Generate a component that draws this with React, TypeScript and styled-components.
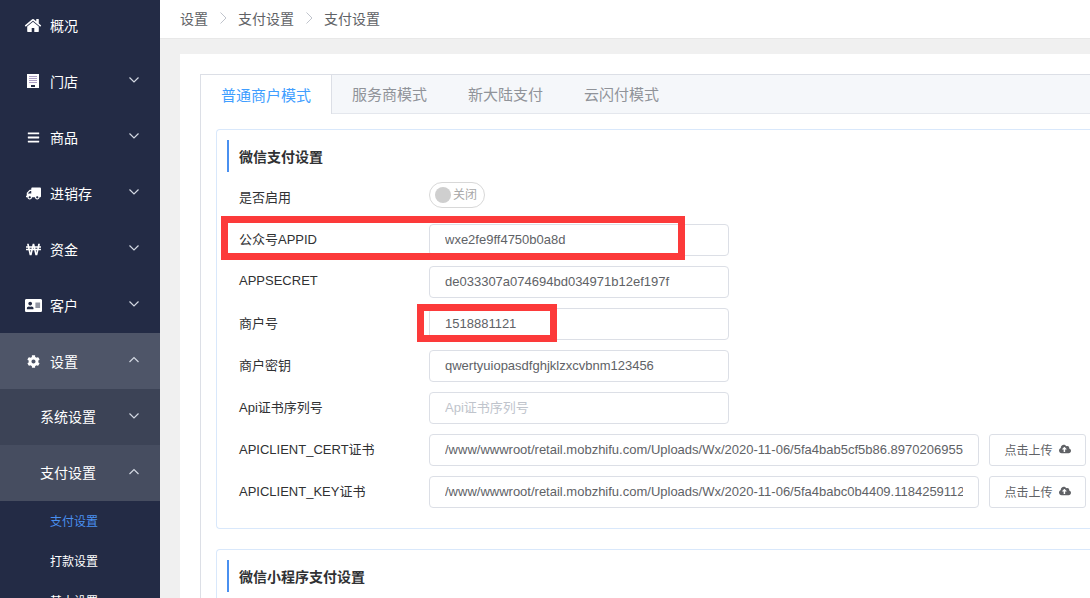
import React from 'react';
import styled, { createGlobalStyle } from 'styled-components';
import { FaBars, FaTruck, FaWonSign, FaAddressCard, FaCog, FaCloudUploadAlt } from 'react-icons/fa';

const FONT = `"Liberation Sans", "Noto Sans CJK SC", sans-serif`;

const Global = createGlobalStyle`
  html, body { margin: 0; padding: 0; height: 598px; overflow: hidden; background: #f0f0f0; }
  #root { height: 598px; }
  * { box-sizing: border-box; }
  body { font-family: ${FONT}; }
`;

const Page = styled.div`
  display: flex;
  width: 1090px;
  height: 598px;
  overflow: hidden;
`;

const Sidebar = styled.nav`
  width: 160px;
  flex: none;
  height: 598px;
  overflow: hidden;
  background: #232b45;
  color: #fff;
`;

const MenuList = styled.div`
  margin-top: -3px;
`;

const MenuRow = styled.div<{ $bg?: string; $indent?: number }>`
  height: 56px;
  display: flex;
  align-items: center;
  padding-left: ${p => p.$indent ?? 24}px;
  padding-right: 20px;
  font-size: 14px;
  color: #fff;
  background: ${p => p.$bg ?? 'transparent'};
`;

const MenuIcon = styled.span`
  width: 18px;
  height: 16px;
  margin-right: 8px;
  display: flex;
  align-items: center;
  justify-content: center;
  flex: none;
  font-size: 14px;
`;

const MenuLabel = styled.span<{ $raised?: boolean }>`
  flex: 1;
  padding-bottom: ${p => (p.$raised ? 2 : 0)}px;
`;

const Chevron = styled.svg`
  width: 12px;
  height: 8px;
  margin-top: -3px;
  margin-right: 0;
  flex: none;
  fill: none;
  stroke: #d3d8e2;
  stroke-width: 1.2;
`;

const SubRow = styled.div<{ $active?: boolean }>`
  height: 40px;
  display: flex;
  align-items: center;
  padding: 0 0 2px 50px;
  font-size: 12px;
  color: ${p => (p.$active ? '#4a90f0' : '#fff')};
`;

const Main = styled.main`
  flex: 1;
  min-width: 0;
  display: flex;
  flex-direction: column;
`;

const Crumbs = styled.header`
  height: 39px;
  flex: none;
  background: #fff;
  border-bottom: 1px solid #e8e8e8;
  display: flex;
  align-items: center;
  padding: 0 0 3px 20px;
  font-size: 14px;
  color: #606266;
`;

const CrumbSep = styled.svg`
  width: 8px;
  height: 12px;
  margin: 0 11px;
  fill: none;
  stroke: #c0c4cc;
  stroke-width: 1;
`;

const Content = styled.div`
  flex: 1;
  padding: 15px 0 0 20px;
  overflow: hidden;
`;

const Card = styled.div`
  width: 1000px;
  height: 600px;
  background: #fff;
  padding: 20px;
`;

const Tabs = styled.div`
  border: 1px solid #dcdfe6;
  border-right: none;
  height: 560px;
`;

const TabBar = styled.div`
  display: flex;
  height: 39px;
  background: #f5f7fa;
  border-bottom: 1px solid #e4e7ed;
`;

const Tab = styled.div<{ $active?: boolean }>`
  height: ${p => (p.$active ? 39 : 38)}px;
  padding: 0 20px 1px;
  display: flex;
  align-items: center;
  font-size: 15px;
  color: ${p => (p.$active ? '#409eff' : '#909399')};
  background: ${p => (p.$active ? '#fff' : 'transparent')};
  border-right: 1px solid ${p => (p.$active ? '#dcdfe6' : 'transparent')};
`;

const TabBody = styled.div`
  padding: 15px;
`;

const Section = styled.section<{ $height: number }>`
  height: ${p => p.$height}px;
  border: 1px solid #d9e8fb;
  border-right: none;
  border-radius: 4px 0 0 4px;
  margin-bottom: 20px;
  padding: 10px 0 0 10px;
`;

const SectionTitle = styled.h3`
  margin: 0 0 10px;
  height: 32px;
  line-height: 35px;
  border-left: 2px solid #4a90f0;
  padding-left: 10px;
  font-size: 14px;
  font-weight: 700;
  color: #303133;
`;

const Row = styled.div`
  display: flex;
  align-items: center;
  height: 32px;
  margin-bottom: 10px;
`;

const Label = styled.label`
  width: 202px;
  flex: none;
  padding: 0 0 4px 12px;
  font-size: 13px;
  color: #303133;
`;

const Field = styled.input<{ $wide?: boolean }>`
  width: ${p => (p.$wide ? 550 : 300)}px;
  height: 32px;
  flex: none;
  border: 1px solid #dcdfe6;
  border-radius: 4px;
  padding: 0 15px 2px;
  font: 13px ${FONT};
  color: #606266;
  background: #fff;
  outline: none;
  &::placeholder { color: #c0c4cc; opacity: 1; }
`;

const UploadButton = styled.button`
  width: 97px;
  height: 32px;
  margin-left: 10px;
  flex: none;
  display: flex;
  align-items: center;
  justify-content: center;
  gap: 6px;
  border: 1px solid #dcdfe6;
  border-radius: 3px;
  background: #fff;
  color: #606266;
  font: 12px ${FONT};
  padding: 0 0 2px;
`;

const Toggle = styled.div`
  width: 56px;
  height: 26px;
  align-self: flex-start;
  border: 1px solid #d8d8d8;
  border-radius: 13px;
  display: flex;
  align-items: center;
  padding-left: 5px;
  gap: 2px;
  font-size: 12px;
  line-height: 22px;
  color: #a8a8a8;
`;

const Knob = styled.span`
  width: 16px;
  height: 16px;
  border-radius: 50%;
  background: #cfcfcf;
  flex: none;
`;

const Highlight = styled.div<{ $x: number; $y: number; $w: number; $h: number }>`
  position: absolute;
  left: ${p => p.$x}px;
  top: ${p => p.$y}px;
  width: ${p => p.$w}px;
  height: ${p => p.$h}px;
  border: 7px solid #fc3a3a;
  pointer-events: none;
`;

const Down = () => (
  <Chevron viewBox="0 0 12 8"><path d="M1.5 1.5 6 6 10.5 1.5" /></Chevron>
);
const Up = () => (
  <Chevron viewBox="0 0 12 8"><path d="M1.5 6 6 1.5 10.5 6" /></Chevron>
);
const Sep = () => (
  <CrumbSep viewBox="0 0 8 12"><path d="M1.5 .5 7 6 1.5 11.5" /></CrumbSep>
);

const HomeIcon = () => (
  <svg width="19" height="19" viewBox="0 0 1792 1792" fill="#fff">
    <path d="M1472 992v480q0 26-19 45t-45 19h-384v-384h-256v384h-384q-26 0-45-19t-19-45v-480q0-1 .5-3t.5-3l575-474 575 474q1 2 1 6zm223-69l-62 74q-8 9-21 11h-3q-13 0-21-7l-692-577-692 577q-12 8-24 7-13-2-21-11l-62-74q-8-10-7-23.5t11-22.5l719-599q32-26 76-26t76 26l244 204v-195q0-14 9-23t23-9h192q14 0 23 9t9 23v408l219 182q10 8 11 21.5t-7 23.5z" />
  </svg>
);

const BuildingIcon = () => (
  <svg width="12" height="14" viewBox="0 0 12 14">
    <rect width="12" height="14" fill="#fff" />
    {[2, 4, 6, 8].flatMap(x =>
      [2, 4, 6, 8].map(y => <rect key={`${x}-${y}`} x={x + 0.5} y={y} width="1" height="1" fill="#5a3f8a" />)
    )}
    <rect x="4" y="11" width="4" height="2" fill="#232b45" />
  </svg>
);

const menu: { label: string; icon: React.ReactNode; chevron?: boolean }[] = [
  { label: '概况', icon: <HomeIcon /> },
  { label: '门店', icon: <BuildingIcon />, chevron: true },
  { label: '商品', icon: <FaBars size={13} />, chevron: true },
  { label: '进销存', icon: <FaTruck size={15} style={{ transform: 'scaleX(-1)' }} />, chevron: true },
  { label: '资金', icon: <FaWonSign size={15} />, chevron: true },
  { label: '客户', icon: <FaAddressCard size={17} />, chevron: true },
];

const rows = [
  { label: '公众号APPID', value: 'wxe2fe9ff4750b0a8d' },
  { label: 'APPSECRET', value: 'de033307a074694bd034971b12ef197f' },
  { label: '商户号', value: '1518881121' },
  { label: '商户密钥', value: 'qwertyuiopasdfghjklzxcvbnm123456' },
];

const uploads = [
  { label: 'APICLIENT_CERT证书', value: '/www/wwwroot/retail.mobzhifu.com/Uploads/Wx/2020-11-06/5fa4bab5cf5b86.89702069551' },
  { label: 'APICLIENT_KEY证书', value: '/www/wwwroot/retail.mobzhifu.com/Uploads/Wx/2020-11-06/5fa4babc0b4409.11842591126' },
];

export default function App() {
  return (
    <Page>
      <Global />
      <Sidebar>
        <MenuList>
          {menu.map(m => (
            <MenuRow key={m.label}>
              <MenuIcon>{m.icon}</MenuIcon>
              <MenuLabel>{m.label}</MenuLabel>
              {m.chevron && <Down />}
            </MenuRow>
          ))}
          <MenuRow $bg="#4e5568">
            <MenuIcon><FaCog size={13} /></MenuIcon>
            <MenuLabel>设置</MenuLabel>
            <Up />
          </MenuRow>
          <MenuRow $bg="#3c4356" $indent={40}>
            <MenuLabel $raised>系统设置</MenuLabel>
            <Down />
          </MenuRow>
          <MenuRow $bg="#464d60" $indent={40}>
            <MenuLabel $raised>支付设置</MenuLabel>
            <Up />
          </MenuRow>
          <SubRow $active>支付设置</SubRow>
          <SubRow>打款设置</SubRow>
          <SubRow>基本设置</SubRow>
        </MenuList>
      </Sidebar>
      <Main>
        <Crumbs>
          设置<Sep />支付设置<Sep />支付设置
        </Crumbs>
        <Content>
          <Card>
            <Tabs>
              <TabBar>
                <Tab $active>普通商户模式</Tab>
                <Tab>服务商模式</Tab>
                <Tab>新大陆支付</Tab>
                <Tab>云闪付模式</Tab>
              </TabBar>
              <TabBody>
                <Section $height={400}>
                  <SectionTitle>微信支付设置</SectionTitle>
                  <Row>
                    <Label>是否启用</Label>
                    <Toggle><Knob />关闭</Toggle>
                  </Row>
                  {rows.map(r => (
                    <Row key={r.label}>
                      <Label>{r.label}</Label>
                      <Field readOnly value={r.value} />
                    </Row>
                  ))}
                  <Row>
                    <Label>Api证书序列号</Label>
                    <Field readOnly placeholder="Api证书序列号" />
                  </Row>
                  {uploads.map(u => (
                    <Row key={u.label}>
                      <Label>{u.label}</Label>
                      <Field $wide readOnly value={u.value} />
                      <UploadButton>点击上传<FaCloudUploadAlt size={12} /></UploadButton>
                    </Row>
                  ))}
                </Section>
                <Section $height={120}>
                  <SectionTitle>微信小程序支付设置</SectionTitle>
                </Section>
              </TabBody>
            </Tabs>
          </Card>
        </Content>
      </Main>
      <Highlight $x={221} $y={216} $w={464} $h={44} />
      <Highlight $x={417} $y={304} $w={140} $h={38} />
    </Page>
  );
}
